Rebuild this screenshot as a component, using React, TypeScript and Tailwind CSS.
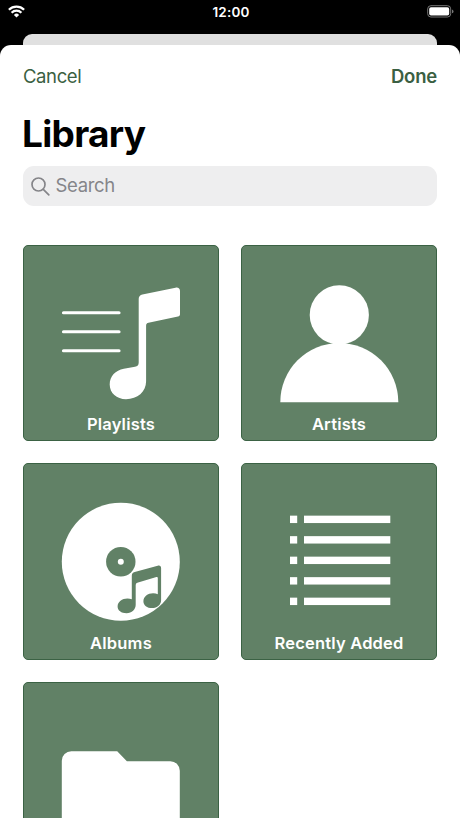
import React, { ReactNode } from 'react';

interface TileProps {
  label: string;
  children: ReactNode;
}

function Tile({ label, children }: TileProps) {
  return (
    <button className="relative block h-[196.5px] w-full overflow-hidden rounded-[5px] border border-[#3b6244] bg-[#618166]">
      <svg viewBox="1 1 194 194" className="block h-full w-full" fill="white">
        {children}
      </svg>
      <span className="absolute inset-x-0 bottom-[4px] text-center text-[16.5px] leading-6 font-semibold tracking-[0.2px] text-white">
        {label}
      </span>
    </button>
  );
}

function PlaylistArt() {
  return (
    <>
      <path d="M40.5 67.5h55.5M40.5 86.500h55.5M40.5 105.500h55.5" stroke="white" strokeWidth="3.2" strokeLinecap="round" />
      <path d="M115.7 53.500c0-2.300 1.500-3.800 3.700-4.300L152.500 42.400c2.700-.5 4.500.8 4.500 3.300V69c0 1.300-.7 2-2 2.300L125.500 77.500c-1.600.3-2.400 1.300-2.400 3v55.500c0 10.500-8.600 17.900-20.100 17.900-9.300 0-16.300-6.200-16.300-14.700 0-8.300 5.800-14.100 14.100-15.700L112 121.500c2.500-.4 3.700-1.700 3.700-4.200z" />
    </>
  );
}

function ArtistArt() {
  return (
    <>
      <circle cx="98.3" cy="69.700" r="29.600" />
      <path d="M39.300 157a59 59.300 0 0 1 118 0z" />
    </>
  );
}

function AlbumArt() {
  return (
    <>
      <circle cx="97.800" cy="98.500" r="59" />
      <g fill="#618166">
        <circle cx="97.800" cy="98.500" r="14.700" />
        <path d="M108.800 112.500c0-2 1-3.200 2.900-3.800L134.700 102.500c2.100-.6 3.400.3 3.400 2.300V137c0 4.500-3.800 7.800-9 7.800-5.100 0-8.700-2.900-8.700-6.900 0-4.500 4.300-7.900 9.700-7.900 1.800 0 3.300.3 4.700 1V114.800q0-1.400-1.400-1L114.300 119.600q-1.600.6-1.600 2.200V141.500c0 4.800-3.800 8.400-9.200 8.400-5.200 0-8.900-2.700-8.900-6.700 0-4.500 4.500-7.900 9.800-7.900 1.600 0 3.100.3 4.400.8z" />
      </g>
      <circle cx="97.800" cy="98.500" r="3" />
    </>
  );
}

function RecentArt() {
  return (
    <>
      {[52.4, 72.9, 93.4, 113.900, 134.4].map((y) => (
        <g key={y}>
          <rect x="49" y={y} width="7.200" height="7.400" />
          <rect x="63" y={y} width="86.300" height="7.400" />
        </g>
      ))}
    </>
  );
}

function FolderArt() {
  return (
    <path d="M38.800 78.500a9.500 9.500 0 0 1 9.500-9.500H94.200l9.700 9.900h43.400a9.500 9.500 0 0 1 9.500 9.500V148a9 9 0 0 1-9 9H48a9 9 0 0 1-9.200-9z" />
  );
}

function StatusBar() {
  return (
    <div className="flex h-[34px] items-start justify-between pt-[5px] pr-[6px] pl-[8px] text-white">
      <div className="flex w-[30px]">
        <svg width="17" height="13" viewBox="0 0 17 13" fill="none" stroke="white" strokeWidth="2.300">
          <path d="M.9 4.700a10.800 10.800 0 0 1 15.200 0" />
          <path d="M3.600 7.700a7 7 0 0 1 9.800 0" />
          <path d="M8.500 12.400L5.900 9.900a3.700 3.700 0 0 1 5.200 0z" fill="white" stroke="none" />
        </svg>
      </div>
      <span className="text-[13.5px] leading-[15px] font-semibold tracking-[0.2px]">12:00</span>
      <div className="flex w-[30px] justify-end">
        <svg width="27" height="13" viewBox="0 0 27 13">
          <rect x=".7" y=".7" width="23" height="11.300" rx="3.200" fill="none" stroke="#777" />
          <rect x="2.200" y="2.200" width="20" height="8.300" rx="1.800" fill="white" />
          <path d="M25 4.500q1.500.6 1.500 1.900T25 8.300z" fill="#777" />
        </svg>
      </div>
    </div>
  );
}

export default function App() {
  return (
    <div className="flex h-[818px] w-[460px] flex-col overflow-hidden bg-black font-['Inter','Liberation_Sans',sans-serif]">
      <StatusBar />
      <div className="mx-[23px] h-[11px] shrink-0 rounded-t-[9px] bg-[#e0e0e0]" />
      <main className="min-h-0 flex-1 overflow-hidden rounded-t-[11px] bg-white px-[23px]">
        <header className="flex items-center justify-between pt-[19px] text-[18.5px] leading-6 text-[#3a6042]">
          <button className="tracking-[-0.4px]">Cancel</button>
          <button className="font-semibold tracking-[-0.2px]">Done</button>
        </header>
        <h1 className="mt-[23px] -ml-px text-[37px] leading-[46px] font-bold tracking-[-0.7px] text-black">Library</h1>
        <label className="mt-[9px] flex h-10 items-center gap-[6px] rounded-[11px] bg-[#eeeeef] pl-[8px] text-[#858589]">
          <svg width="19" height="19" viewBox="0 0 19 19" fill="none" stroke="currentColor" strokeWidth="1.700" strokeLinecap="round">
            <circle cx="7.500" cy="7.500" r="6.500" />
            <path d="M12.300 12.300l5.500 5.500" />
          </svg>
          <span className="-mt-[2px] -ml-[0.5px] text-[18.5px] leading-6 tracking-[-0.35px]">Search</span>
        </label>
        <section className="mt-[38.7px] grid grid-cols-2 gap-[22px]">
          <Tile label="Playlists"><PlaylistArt /></Tile>
          <Tile label="Artists"><ArtistArt /></Tile>
          <Tile label="Albums"><AlbumArt /></Tile>
          <Tile label="Recently Added"><RecentArt /></Tile>
          <Tile label=""><FolderArt /></Tile>
        </section>
      </main>
    </div>
  );
}
